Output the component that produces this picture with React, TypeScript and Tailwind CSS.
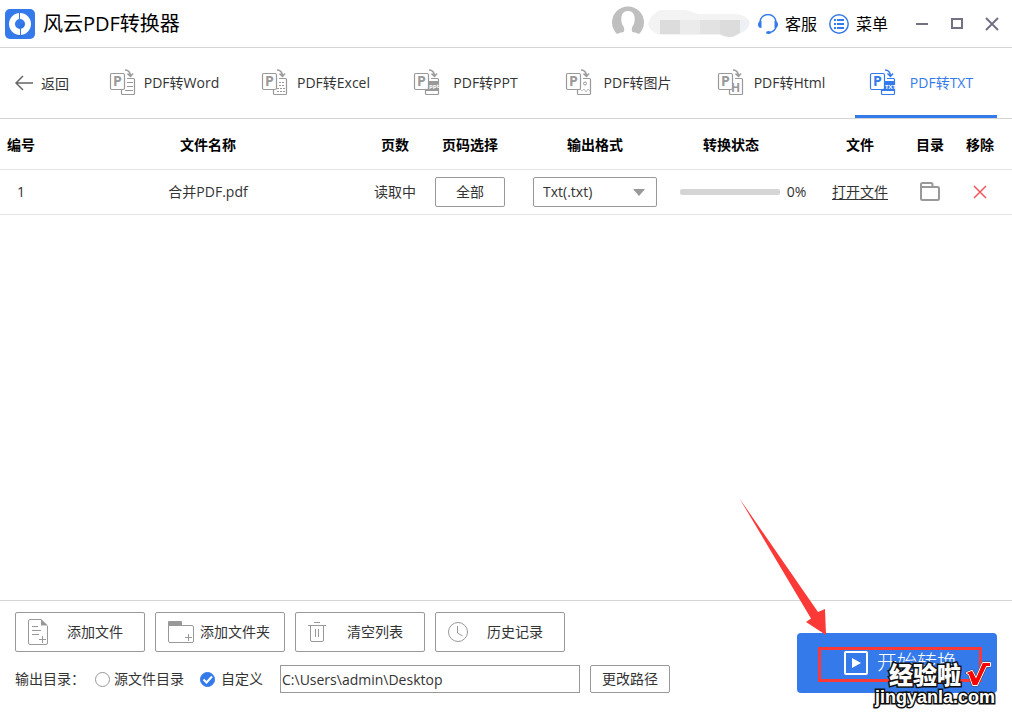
import { useState } from "react";
import type { ReactNode } from "react";

type TabKind = "word" | "excel" | "ppt" | "image" | "html" | "txt";

const TABS: { kind: TabKind; label: string }[] = [
  { kind: "word", label: "PDF转Word" },
  { kind: "excel", label: "PDF转Excel" },
  { kind: "ppt", label: "PDF转PPT" },
  { kind: "image", label: "PDF转图片" },
  { kind: "html", label: "PDF转Html" },
  { kind: "txt", label: "PDF转TXT" },
];

const FILES = [{ id: 1, name: "合并PDF.pdf", pages: "读取中", progress: 0 }];

function Logo() {
  return (
    <svg width="30" height="30" viewBox="0 0 30 30" aria-hidden="true">
      <rect width="30" height="30" rx="5" fill="#347aeb" />
      <path d="M27 17L16 28.500L8 25L20 12z" fill="#2869d4" opacity=".5" />
      <circle cx="15" cy="15" r="8" fill="none" stroke="#fff" strokeWidth="6" />
      <path d="M14.500 3.500v7M15.500 19.500v7" stroke="#347aeb" />
    </svg>
  );
}

function Avatar() {
  return (
    <svg width="32" height="32" viewBox="0 0 32 32" aria-hidden="true">
      <path
        d="M5 28A16 16 0 1 1 27 28Q24 26.500 20.500 26C19.500 25 19.500 22 20.500 20.500C22.500 18 23 15 22.500 11C22 7 19.500 5 16 5S10 7 9.500 11C9 15 9.500 18 11.500 20.500C12.500 22 12.500 25 11.500 26Q8 26.500 5 28z"
        fill="#bfbfbf"
      />
    </svg>
  );
}

function MaskedName() {
  return (
    <svg width="102" height="28" viewBox="0 0 102 28" role="img" aria-label="用户名">
      <path d="M0 14Q3 4 12 0H38L50 4H88Q100 5 102 13Q100 22 90 24L85 27H77L71 25H12Q2 22 0 14z" fill="#f3f3f3" />
      <path d="M12 10h20v14h-20z" fill="#dcdcdc" />
      <path d="M32 10h20v14h-20z" fill="#ebebeb" />
      <path d="M52 10h20v14h-20z" fill="#e2e2e2" />
      <path d="M72 10h20v13q-6 4-10 4t-10-3z" fill="#dcdcdc" />
      <path d="M92 10h9q0 8-9 13z" fill="#edf0f5" />
    </svg>
  );
}

function HeadsetIcon() {
  return (
    <svg width="20" height="20" viewBox="0 0 20 20" fill="none" aria-hidden="true">
      <path d="M2 8a8 7.500 0 0 1 16 0M18 13q-1 4-6 5.500" stroke="#347aeb" strokeWidth="1.400" />
      <path d="M3.500 7v7Q0 14 0 10.500T3.500 7zM16.500 7v7Q20 14 20 10.500T16.500 7z" fill="#347aeb" />
      <ellipse cx="10.500" cy="18.500" rx="2.500" ry="1.500" fill="#347aeb" />
    </svg>
  );
}

function MenuIcon() {
  return (
    <svg width="20" height="20" viewBox="0 0 20 20" fill="none" stroke="#347aeb" aria-hidden="true">
      <circle cx="10" cy="10" r="9.200" strokeWidth="1.500" />
      <path d="M5 6h2M5 10h2M5 14h2M8 6h7M8 10h7M8 14h7" strokeWidth="1.800" />
    </svg>
  );
}

function TabDetail({ kind }: { kind: TabKind }) {
  switch (kind) {
    case "word":
      return <path d="M17 13.500h6M17 17.500h6M15 21.500h8" />;
    case "excel":
      return <path d="M17 13.500h6M17 16.500h6M15 19.500h8M15 22.500h8" strokeDasharray="2 1" />;
    case "ppt":
      return (
        <>
          <path d="M12 12h13v10H12z" fill="currentColor" stroke="none" />
          <text x="15" y="19" fontSize="6" fontWeight="700" fill="#fff" stroke="none">ppt</text>
        </>
      );
    case "image":
      return (
        <>
          <circle cx="19" cy="14.500" r="1.500" />
          <path d="M14 20l2 2 2-2 2 3 2-3 2 2" opacity=".6" />
        </>
      );
    case "html":
      return <text x="13" y="23" fontSize="12" fontWeight="700" fill="currentColor" stroke="none">H</text>;
    case "txt":
      return (
        <>
          <path d="M12 12h13v10H12z" fill="currentColor" stroke="none" />
          <text x="15" y="20" fontSize="6" fontWeight="700" fill="#fff" stroke="none">TXT</text>
        </>
      );
  }
}

function TabIcon({ kind }: { kind: TabKind }) {
  return (
    <svg width="26" height="27" viewBox="0 0 26 27" fill="none" stroke="currentColor" className="shrink-0 overflow-visible" aria-hidden="true">
      {/* The target page sits behind the "P" page, so its outline stops there */}
      <path d="M17 9.500h6.500q1 0 1 1v14q0 1-1 1h-11q-1 0-1-1v-4" strokeWidth="1.200" />
      <TabDetail kind={kind} />
      <rect x=".5" y="4.500" width="14" height="16" rx="1.500" fill="#fff" strokeWidth="1.200" />
      <text x="3" y="17" fontSize="14" fontWeight="700" fill="currentColor" stroke="none">P</text>
      <path d="M15 1Q20 1 20.500 7M17.500 4.500l3 3 2.500-3" strokeWidth="1.500" />
    </svg>
  );
}

function AddFileIcon() {
  return (
    <svg width="20" height="26" viewBox="0 0 20 26" fill="none" stroke="#999" aria-hidden="true">
      <path d="M13 .5H2Q.5.500.5 2v22q0 1.500 1.500 1.500h16q1.500 0 1.500-1.500V7" />
      <path d="M13 0v6.500h7z" fill="#999" stroke="none" />
      <path d="M4 7.500h6M4 11.500h9M4 15.500h7M11 20.500h7M14.500 17v7" />
    </svg>
  );
}

function AddFolderIcon() {
  return (
    <svg width="26" height="22" viewBox="0 0 26 22" fill="none" stroke="#999" aria-hidden="true">
      <path d="M.5 4v16q0 1.500 1.500 1.500h22q1.500 0 1.500-1.500V6q0-1.500-1.500-1.500H.5" />
      <path d="M0 4V1q0-1 1-1h12q1 0 1 1v3z" fill="#999" stroke="none" />
      <path d="M17 16.500h7M20.500 13v7" />
    </svg>
  );
}

function TrashIcon() {
  return (
    <svg width="18" height="20" viewBox="0 0 18 20" fill="none" stroke="#999" aria-hidden="true">
      <path d="M0 3.500h18M6 .5h6M2.500 4v14q0 1.500 1.500 1.500h10q1.500 0 1.500-1.500V4M7.500 7v8M10.500 7v8" />
    </svg>
  );
}

function ClockIcon() {
  return (
    <svg width="20" height="20" viewBox="0 0 20 20" fill="none" stroke="#999" aria-hidden="true">
      <circle cx="10" cy="10" r="9.500" />
      <path d="M9.500 4v7l5 3" />
    </svg>
  );
}

function ToolButton({ icon, label }: { icon: ReactNode; label: string }) {
  return (
    <button type="button" className="flex h-10 w-[130px] items-center rounded-xs border border-[#999] pr-2.5 pl-3">
      <span className="flex w-7 shrink-0">{icon}</span>
      <span className="flex-1 text-center whitespace-nowrap">{label}</span>
    </button>
  );
}

function Titlebar() {
  return (
    <header className="flex h-12 shrink-0 items-center border-b border-[#d5d5d5] pr-3 pl-[5px] text-base text-black">
      <Logo />
      <h1 className="ml-2 text-xl">风云PDF转换器</h1>
      <div className="ml-auto flex items-center">
        <div className="pb-1">
          <Avatar />
        </div>
        <div className="mr-2 ml-1">
          <MaskedName />
        </div>
        <button type="button" className="flex items-center gap-[7px]">
          <HeadsetIcon />
          客服
        </button>
        <button type="button" className="ml-3 flex items-center gap-[7px]">
          <MenuIcon />
          菜单
        </button>
        <div className="ml-[26px] flex items-center gap-[19px]">
          <button type="button" aria-label="最小化" className="p-px">
            <svg width="14" height="14" viewBox="0 0 14 14" stroke="#757082" strokeWidth="2">
              <path d="M1 7h12" />
            </svg>
          </button>
          <button type="button" aria-label="最大化" className="p-px">
            <svg width="14" height="14" viewBox="0 0 14 14" fill="none" stroke="#757082" strokeWidth="2">
              <path d="M2 2h10v9H2z" />
            </svg>
          </button>
          <button type="button" aria-label="关闭" className="p-px">
            <svg width="14" height="14" viewBox="0 0 14 14" stroke="#757082" strokeWidth="2">
              <path d="M1 1l12 12M13 1L1 13" />
            </svg>
          </button>
        </div>
      </div>
    </header>
  );
}

function StartPanel() {
  return (
    <div className="relative w-[200px] shrink-0">
      <button type="button" className="flex h-[60px] w-full items-center justify-center gap-[9px] rounded-sm bg-[#347aeb] pl-[7px] text-xl font-light text-white">
        <svg width="24" height="24" viewBox="0 0 24 24" aria-hidden="true">
          <rect x="1" y="1" width="22" height="22" rx="1" fill="none" stroke="#fff" strokeWidth="2" />
          <path d="M8 7l9 5-9 5z" fill="#fff" />
        </svg>
        开始转换
      </button>

      {/* Callout arrow and frame */}
      <svg width="88" height="138" viewBox="0 0 88 138" className="pointer-events-none absolute -top-[135px] -left-[58px]" aria-hidden="true">
        <path d="M.5.500L79 114l7-3 1 26-20-13 5-3.500z" fill="#fb3a38" />
      </svg>
      <div className="pointer-events-none absolute top-3.5 left-[21px] h-[35px] w-[164px] border-3 border-[#fb3a38]" />

      {/* Watermark */}
      <div className="pointer-events-none absolute top-7 right-0 flex flex-col items-end text-white [-webkit-text-stroke:3px_#111] [paint-order:stroke]">
        <div className="flex items-center gap-1 pr-1.5">
          <span className="text-2xl leading-7 font-black">经验啦</span>
          <svg width="26" height="28" viewBox="0 0 26 28" fill="none" aria-hidden="true">
            <path d="M2 12l5-2 4 8L18 2h7v3h-4L12 24H8L4 13z" stroke="#444" strokeWidth="3" strokeLinejoin="round" />
            <path d="M2 12l5-2 4 8L18 2h7v3h-4L12 24H8L4 13z" fill="#f00" stroke="#fff" strokeWidth="2" strokeLinejoin="round" />
            <path d="M2 12l5-2 4 8L18 2h7v3h-4L12 24H8L4 13z" fill="#f00" />
          </svg>
        </div>
        <span className="pr-0.5 font-['Liberation_Sans',sans-serif] text-lg leading-4 font-bold">jingyanla.com</span>
      </div>
    </div>
  );
}

export default function App() {
  const [active, setActive] = useState<TabKind>("txt");
  const [target, setTarget] = useState("custom");
  const [path, setPath] = useState("C:\\Users\\admin\\Desktop");

  return (
    <div className="flex min-h-screen flex-col bg-white font-['Open_Sans','Noto_Sans_CJK_SC',sans-serif] text-sm text-[#333]">
      <Titlebar />

      <nav className="flex h-[71px] shrink-0 border-b border-[#d5d5d5]">
        <button type="button" className="flex w-[95px] shrink-0 items-center gap-2 pl-[15px]">
          <svg width="18" height="16" viewBox="0 0 18 16" fill="none" stroke="#666" strokeWidth="1.500" aria-hidden="true">
            <path d="M18 8H1M8 1L1 8l7 7" />
          </svg>
          <span className="pt-0.5">返回</span>
        </button>
        <div className="flex gap-2.5">
          {TABS.map((t) => (
            <button
              key={t.kind}
              type="button"
              onClick={() => setActive(t.kind)}
              className={`flex w-[142px] items-center border-b-3 pt-0.5 pr-2.5 pl-[15px] ${
                active === t.kind ? "border-[#347aeb] text-[#347aeb]" : "border-transparent"
              }`}
            >
              <span className={active === t.kind ? "text-[#347aeb]" : "text-[#999]"}>
                <TabIcon kind={t.kind} />
              </span>
              <span className="flex-1 text-center whitespace-nowrap">{t.label}</span>
            </button>
          ))}
        </div>
      </nav>

      <main className="flex-1">
        <table className="w-full table-fixed text-center">
          <thead>
            <tr className="h-[50px] border-b border-[#e5e5e5] text-black">
              <th className="w-[42px] pt-0.5">编号</th>
              <th className="pt-0.5">文件名称</th>
              <th className="w-[42px] pt-0.5">页数</th>
              <th className="w-[108px] pt-0.5">页码选择</th>
              <th className="w-[142px] pt-0.5">输出格式</th>
              <th className="w-[154px] pt-0.5 pr-6">转换状态</th>
              <th className="w-20 pt-0.5">文件</th>
              <th className="w-15 pt-0.5">目录</th>
              <th className="w-[52px] pt-0.5 pr-3">移除</th>
            </tr>
          </thead>
          <tbody>
            {FILES.map((f) => (
              <tr key={f.id} className="h-[45px] border-b border-[#e5e5e5]">
                <td>{f.id}</td>
                <td>{f.name}</td>
                <td>{f.pages}</td>
                <td>
                  <button type="button" className="h-[30px] w-[70px] rounded-xs border border-[#999]">
                    全部
                  </button>
                </td>
                <td>
                  <div className="relative mx-auto w-[124px]">
                    <select aria-label="输出格式" className="block h-[30px] w-full appearance-none rounded-xs border border-[#999] bg-white pl-[9px]">
                      <option>Txt(.txt)</option>
                    </select>
                    <svg width="12" height="7" viewBox="0 0 12 7" className="pointer-events-none absolute top-3 right-3" aria-hidden="true">
                      <path d="M0 0h12L6 7z" fill="#999" />
                    </svg>
                  </div>
                </td>
                <td>
                  <div className="flex items-center justify-center gap-[7px]">
                    <div className="h-1.5 w-[100px] overflow-hidden rounded-xs bg-[#d5d5d5]">
                      <div className="h-full bg-[#347aeb]" style={{ width: `${f.progress}%` }} />
                    </div>
                    {f.progress}%
                  </div>
                </td>
                <td>
                  <a href="#" className="underline underline-offset-2">打开文件</a>
                </td>
                <td>
                  <button type="button" aria-label="打开目录" className="block w-full">
                    <svg width="20" height="19" viewBox="0 0 20 19" fill="none" stroke="#999" strokeWidth="2" className="mx-auto">
                      <path d="M1 16.500V2.500Q1 1 2.500 1H11q1.500 0 1.500 1.500V5H17.500Q19 5 19 6.500v10q0 1.500-1.500 1.500h-15Q1 18 1 16.500zM1 5h12" />
                    </svg>
                  </button>
                </td>
                <td className="pr-3">
                  <button type="button" aria-label="移除" className="block w-full">
                    <svg width="14" height="14" viewBox="0 0 14 14" stroke="#f2565b" strokeWidth="1.500" className="mx-auto">
                      <path d="M1 1l12 12M13 1L1 13" />
                    </svg>
                  </button>
                </td>
              </tr>
            ))}
          </tbody>
        </table>
      </main>

      <footer className="flex shrink-0 items-end justify-between border-t border-[#d5d5d5] px-[15px] pt-[11px] pb-[21px]">
        <div className="flex flex-col gap-[13px]">
          <div className="flex gap-2.5">
            <ToolButton icon={<AddFileIcon />} label="添加文件" />
            <ToolButton icon={<AddFolderIcon />} label="添加文件夹" />
            <ToolButton icon={<TrashIcon />} label="清空列表" />
            <ToolButton icon={<ClockIcon />} label="历史记录" />
          </div>
          <div className="flex h-7 items-center">
            <span className="w-20">输出目录：</span>
            <label className="flex w-[105px] items-center gap-1">
              <input
                type="radio"
                name="target"
                checked={target === "source"}
                onChange={() => setTarget("source")}
                className="size-[15px] appearance-none rounded-full border border-[#999] checked:border-[#347aeb] checked:bg-[#347aeb]"
              />
              源文件目录
            </label>
            <label className="flex w-20 items-center gap-1.5">
              <span className="relative flex">
                <input
                  type="radio"
                  name="target"
                  checked={target === "custom"}
                  onChange={() => setTarget("custom")}
                  className="size-[15px] appearance-none rounded-full border border-[#999] checked:border-[#347aeb] checked:bg-[#347aeb]"
                />
                <svg width="15" height="15" viewBox="0 0 15 15" fill="none" stroke="#fff" strokeWidth="2" className="pointer-events-none absolute inset-0" aria-hidden="true">
                  <path d="M3.500 7.500l3 3 5.500-6" />
                </svg>
              </span>
              自定义
            </label>
            <input
              type="text"
              aria-label="输出目录"
              value={path}
              onChange={(e) => setPath(e.target.value)}
              className="h-7 w-[300px] border border-[#999] px-px"
            />
            <button type="button" className="ml-2.5 h-7 w-20 rounded-xs border border-[#999]">
              更改路径
            </button>
          </div>
        </div>
        <StartPanel />
      </footer>
    </div>
  );
}
